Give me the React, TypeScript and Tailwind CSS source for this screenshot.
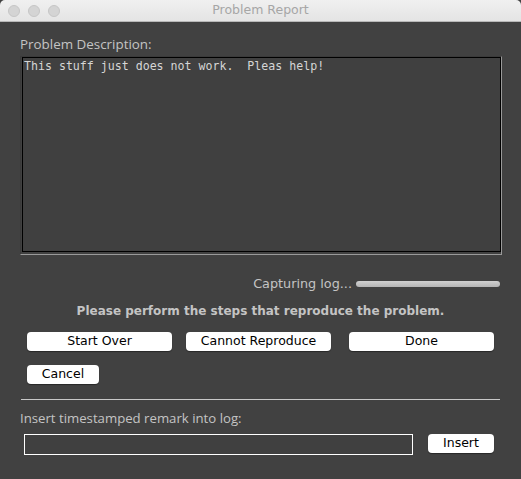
const ui = { fontFamily: '"DejaVu Sans", "Lucida Grande", sans-serif' };
const label = { fontFamily: '"Open Sans", "Lucida Grande", sans-serif' };
const mono = { fontFamily: '"DejaVu Sans Mono", "Liberation Mono", monospace' };

function MacButton({ label, className }: { label: string; className: string }) {
  return (
    <button
      type="button"
      className={`flex items-center justify-center rounded-[4px] bg-white text-[12.5px] leading-none text-black shadow-[0_1px_1px_rgba(0,0,0,0.4)] ${className}`}
      style={ui}
    >
      {label}
    </button>
  );
}

export default function App() {
  return (
    <div className="h-[479px] w-[521px] overflow-hidden bg-[#414141]" style={ui}>
      {/* title bar */}
      <div className="relative flex h-[22px] items-center justify-center rounded-t-[5px] border-b border-[#b8b8b8] bg-gradient-to-b from-[#f0f0f0] to-[#e4e4e4]">
        <div className="absolute left-[8px] top-[5px] flex gap-[8px]">
          <span className="h-[12px] w-[12px] rounded-full border border-[#c6c6c6] bg-[#d4d4d4]" />
          <span className="h-[12px] w-[12px] rounded-full border border-[#c6c6c6] bg-[#d4d4d4]" />
          <span className="h-[12px] w-[12px] rounded-full border border-[#c6c6c6] bg-[#d4d4d4]" />
        </div>
        <span className="text-[12.5px] text-[#a6a6a6]">Problem Report</span>
      </div>

      <div className="flex flex-col">
        <p className="ml-[20px] mt-[14px] text-[13.4px] leading-[16px] text-[#c4c4c4]" style={label}>
          Problem Description:
        </p>

        {/* text area */}
        <div className="ml-[20px] mt-[4px] h-[199px] w-[482px] border border-[#3a3a3a] border-b-[#9a9a9a] border-r-[#9a9a9a] pb-[2px] pl-[1px]">
          <div className="h-full w-full border border-black bg-[#404040] px-[1px] pt-[1px]">
            <p className="text-[11.6px] leading-[15px] text-[#d6d6d6] whitespace-pre" style={mono}>
              This stuff just does not work.  Pleas help!
            </p>
          </div>
        </div>

        {/* capturing log */}
        <div className="mr-[21px] mt-[21px] flex h-[16px] items-center justify-end gap-[4px]">
          <span className="text-[12.8px] leading-[16px] text-[#c4c4c4]">Capturing log...</span>
          <div className="h-[6px] w-[144px] rounded-full bg-gradient-to-b from-[#d0d0d0] to-[#b4b4b4]" />
        </div>

        <p className="mt-[11px] text-center text-[12px] font-bold leading-[16px] text-[#c4c4c4]">
          Please perform the steps that reproduce the problem.
        </p>

        <div className="ml-[27px] mt-[13px] flex h-[19px]">
          <MacButton label="Start Over" className="h-[19px] w-[145px]" />
          <MacButton label="Cannot Reproduce" className="ml-[14px] h-[19px] w-[145px]" />
          <MacButton label="Done" className="ml-[18px] h-[19px] w-[145px]" />
        </div>

        <div className="ml-[27px] mt-[14px] flex">
          <MacButton label="Cancel" className="h-[19px] w-[72px]" />
        </div>

        <div className="ml-[21px] mt-[15px] h-px w-[479px] bg-[#c8c8c8]" />

        <p className="ml-[20px] mt-[10px] text-[13.2px] leading-[16px] text-[#c4c4c4]" style={label}>
          Insert timestamped remark into log:
        </p>

        <div className="ml-[24px] mt-[8px] flex items-start">
          <div className="h-[21px] w-[389px] border border-white bg-[#404040]" />
          <MacButton label="Insert" className="ml-[15px] h-[19px] w-[66px]" />
        </div>
      </div>
    </div>
  );
}
